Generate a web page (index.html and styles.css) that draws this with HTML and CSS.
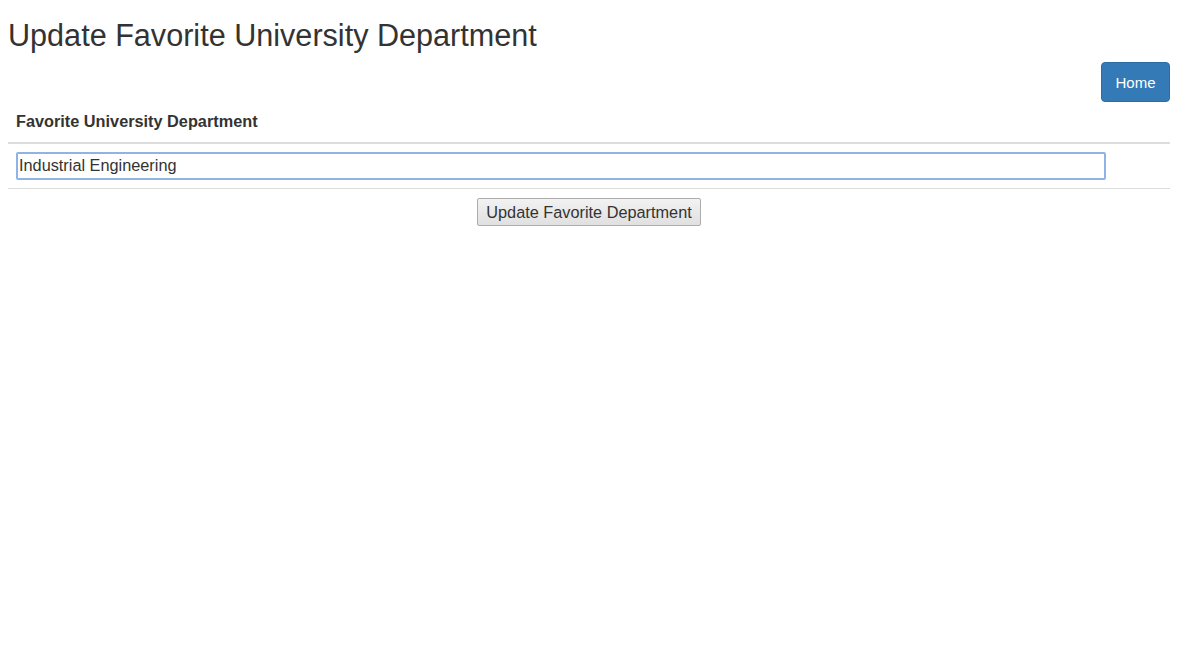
FILE: index.html
```html
<!DOCTYPE html>
<html>
<head>
<meta charset="utf-8">
<link rel="stylesheet" href="styles.css">
</head>
<body>
<div class="page">
  <h1 class="title">Update Favorite University Department</h1>
  <div class="toolbar"><a class="btn-home" href="#">Home</a></div>
  <table class="grid">
    <thead>
      <tr><th>Favorite University Department</th></tr>
    </thead>
    <tbody>
      <tr><td><input class="field" type="text" value="Industrial Engineering"></td></tr>
    </tbody>
  </table>
  <div class="actions"><button class="btn-update" type="button">Update Favorite Department</button></div>
</div>
</body>
</html>
```
FILE: styles.css
```css
html, body { margin: 0; padding: 0; background: #fff; }
body { font-family: "Liberation Sans", Arial, sans-serif; color: #333; }
.page { padding: 0 17px 0 8px; }
.title { margin: 0; padding-top: 16px; font-size: 30.6px; font-weight: 400; line-height: 38px; color: #333; }
.toolbar { display: flex; justify-content: flex-end; margin-top: 8px; }
.btn-home { display: inline-flex; align-items: center; justify-content: center; width: 69px; height: 40px; box-sizing: border-box; background: #337ab7; border: 1px solid #2e6da4; border-radius: 4px; color: #fff; font-size: 15px; text-decoration: none; }
.grid { width: 100%; border-collapse: collapse; }
.grid th { text-align: left; font-size: 16.3px; font-weight: 700; padding: 8px 8px 10px; border-bottom: 2px solid #ddd; line-height: 22px; }
.grid td { padding: 8px 8px 8px; border-bottom: 1px solid #ddd; }
.field { display: block; width: 1090px; height: 28px; box-sizing: border-box; border: 2px solid #8fb3e6; border-radius: 2px; padding: 0 1px 1px; font-family: "Liberation Sans", Arial, sans-serif; font-size: 16.3px; color: #333; outline: none; }
.actions { display: flex; justify-content: center; padding-top: 9px; }
.btn-update { height: 28px; padding: 0 8px; font-family: "Liberation Sans", Arial, sans-serif; font-size: 16.3px; color: #333; background: linear-gradient(#f2f2f2, #e0e0e0); border: 1px solid #adadad; border-radius: 2px; }
```
